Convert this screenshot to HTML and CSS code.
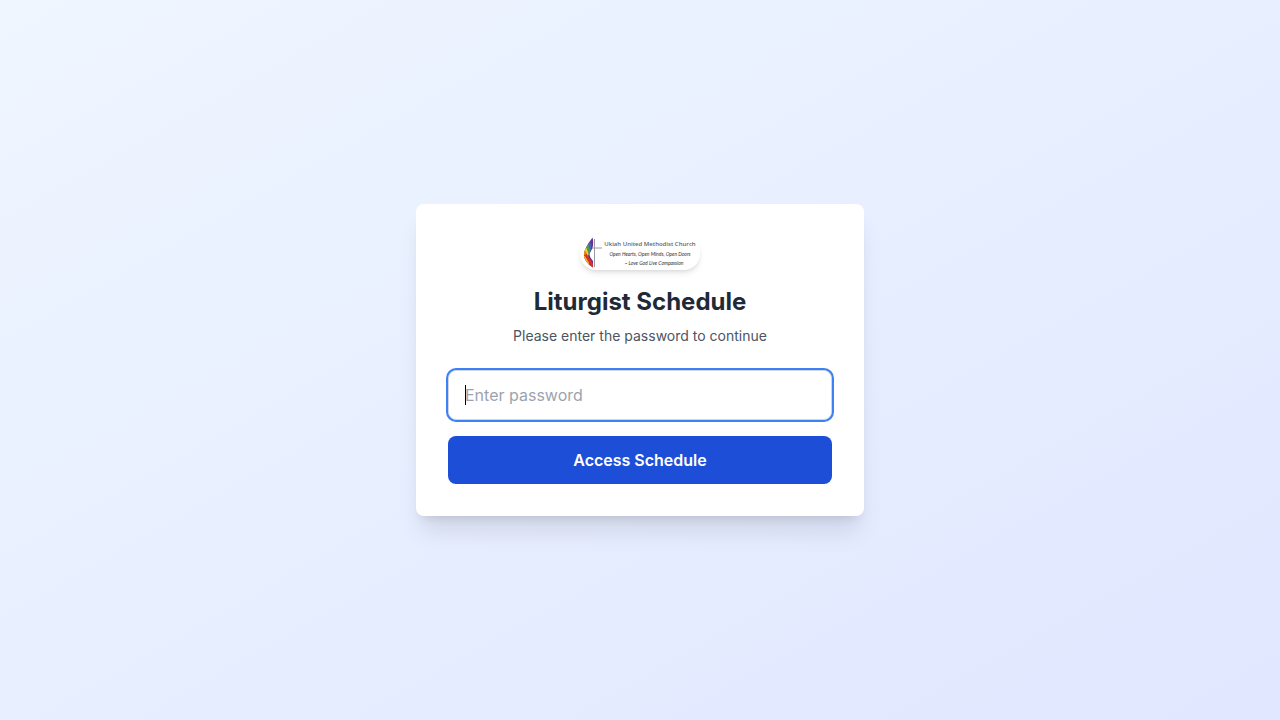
FILE: index.html
```html
<!DOCTYPE html>
<html lang="en">
<head>
  <meta charset="utf-8">
  <meta name="viewport" content="width=device-width, initial-scale=1">
  <title>Liturgist Schedule</title>
  <link rel="stylesheet" href="styles.css">
</head>
<body>
  <main class="page">
    <section class="card">
      <header class="intro">
        <svg class="logo" viewBox="0 0 120 34" role="img" aria-label="Ukiah United Methodist Church">
          <defs>
            <clipPath id="flame-shape">
              <path d="M12.500 1.500C13.600 5 13.200 9 12.600 12L9.500 17.500C9.500 21 11.500 23 13 25V31.500C8 28 3.500 23.500 4 17.500C4.500 13 7.500 9.500 9 6.500Z"/>
            </clipPath>
          </defs>
          <g clip-path="url(#flame-shape)">
            <path fill="#67318f" d="M0 0H15V32H0Z"/>
            <path fill="#4a63b5" d="M8 5L11.500 8L10.500 18L6 18Z"/>
            <path fill="#45a04c" d="M5 9L8.500 9L10.500 16L8 19L4 19Z"/>
            <path fill="#f4cf2c" d="M3 12L6.500 12L8.500 18L7.500 22H3Z"/>
            <path fill="#ee7a22" d="M2 16L5.500 15L8 20L13 32H6Z"/>
            <path fill="#d4302f" d="M3 20L6.500 18L10 23L13 28V32L9 30Z"/>
            <path fill="#f2b82b" d="M3 20L5 20L9 27L9 31Z"/>
          </g>
          <path class="cross" d="M14.500 3V31M12 12H22"/>
          <text class="logo-name" x="70" y="10">Ukiah United Methodist Church</text>
          <text class="logo-motto" x="70" y="20">Open Hearts, Open Minds, Open Doors</text>
          <text class="logo-motto" x="74" y="29">~  Love God Live Compassion</text>
        </svg>
        <h1 class="title">Liturgist Schedule</h1>
        <p class="subtitle">Please enter the password to continue</p>
      </header>
      <form class="form">
        <div class="field-box">
          <input class="field" type="password" placeholder="Enter password" aria-label="Password" autofocus>
          <span class="caret" aria-hidden="true"></span>
        </div>
        <button class="submit" type="submit">Access Schedule</button>
      </form>
    </section>
  </main>
</body>
</html>
```
FILE: styles.css
```css
*, *::before, *::after {
  box-sizing: border-box;
}

body {
  margin: 0;
  font-family: Inter, "Liberation Sans", sans-serif;
  font-size: 16px;
  line-height: 24px;
  color: #1f2937;
}

.page {
  min-height: 100vh;
  padding: 16px;
  display: flex;
  align-items: center;
  justify-content: center;
  background: linear-gradient(to bottom right, #eff6ff, #e0e7ff);
}

.card {
  width: 100%;
  max-width: 448px;
  padding: 32px;
  background: #fff;
  border-radius: 8px;
  box-shadow: 0 20px 25px -5px rgb(0 0 0 / 0.1), 0 8px 10px -6px rgb(0 0 0 / 0.1);
}

.intro {
  margin-bottom: 24px;
  text-align: center;
}

.logo {
  display: block;
  width: 120px;
  margin: 0 auto 16px;
  background: #fff;
  border-radius: 16px;
  box-shadow: 0 4px 6px -1px rgb(0 0 0 / 0.1), 0 2px 4px -2px rgb(0 0 0 / 0.1);
}

.cross {
  fill: none;
  stroke: #9a9aa2;
  stroke-width: 1;
}

.logo-name,
.logo-motto {
  text-anchor: middle;
}

.logo-name {
  font-family: "Open Sans", "Noto Sans", sans-serif;
  font-size: 6px;
  font-weight: 600;
  fill: #666;
}

.logo-motto {
  font-family: Lato, "Open Sans", sans-serif;
  font-size: 5px;
  font-style: italic;
  fill: #333;
}

.title {
  margin: 0 0 8px;
  font-size: 24px;
  line-height: 32px;
  font-weight: 700;
}

.subtitle {
  margin: 0;
  font-size: 14px;
  line-height: 20px;
  color: #4b5563;
}

.form {
  display: flex;
  flex-direction: column;
  gap: 16px;
}

.field-box {
  position: relative;
  display: flex;
}

.field {
  width: 100%;
  padding: 12px 16px;
  border: 1px solid #d1d5db;
  border-radius: 8px;
  background: #fff;
  font: inherit;
  color: #000;
  caret-color: transparent;
}

.field::placeholder {
  color: #9ca3af;
  opacity: 1;
}

.field:focus {
  outline: none;
  box-shadow: 0 0 0 2px #3b82f6;
}

.caret {
  position: absolute;
  top: 15px;
  bottom: 15px;
  left: 17px;
  width: 1px;
  background: #000;
  pointer-events: none;
}

.submit {
  padding: 12px 16px;
  border: 0;
  border-radius: 8px;
  background: #1d4ed8;
  color: #fff;
  font: inherit;
  font-weight: 600;
  cursor: pointer;
}
```
